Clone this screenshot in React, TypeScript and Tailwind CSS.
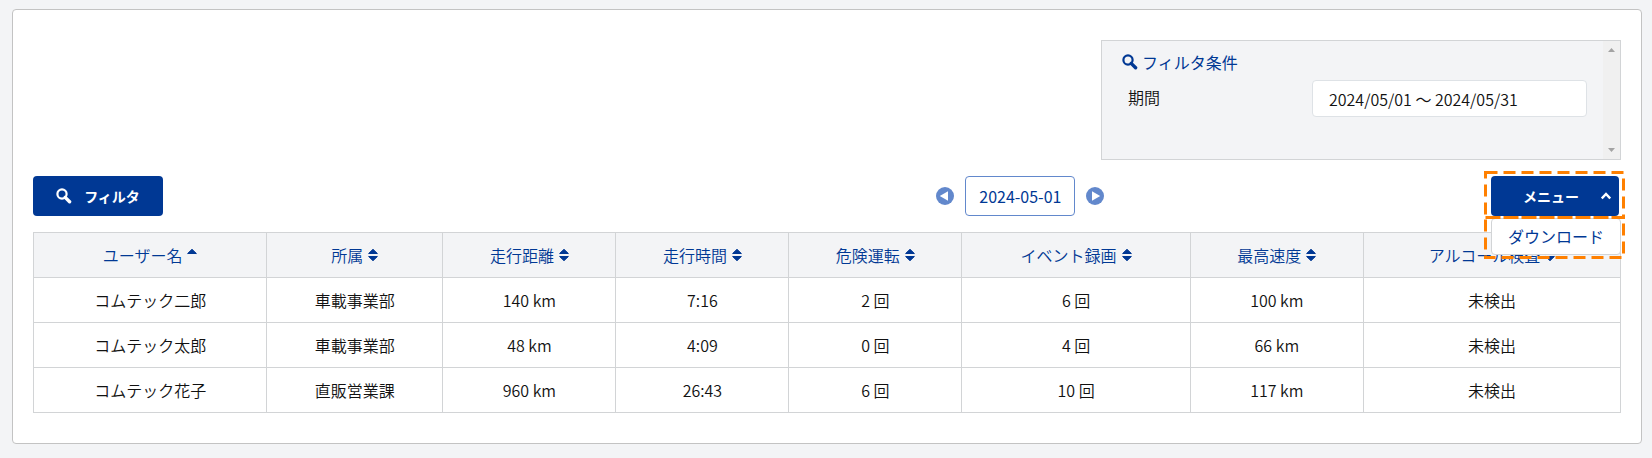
import { useState } from "react";

type SortState = "asc" | "none";

interface Column {
  label: string;
  width: string;
  sort: SortState;
}

const columns: Column[] = [
  { label: "ユーザー名", width: "w-[14.7%]", sort: "asc" },
  { label: "所属", width: "w-[11.1%]", sort: "none" },
  { label: "走行距離", width: "w-[10.9%]", sort: "none" },
  { label: "走行時間", width: "w-[10.9%]", sort: "none" },
  { label: "危険運転", width: "w-[10.9%]", sort: "none" },
  { label: "イベント録画", width: "w-[14.4%]", sort: "none" },
  { label: "最高速度", width: "w-[10.9%]", sort: "none" },
  { label: "アルコール検査", width: "w-[16.2%]", sort: "none" },
];

const rows = [
  ["コムテック二郎", "車載事業部", "140 km", "7:16", "2 回", "6 回", "100 km", "未検出"],
  ["コムテック太郎", "車載事業部", "48 km", "4:09", "0 回", "4 回", "66 km", "未検出"],
  ["コムテック花子", "直販営業課", "960 km", "26:43", "6 回", "10 回", "117 km", "未検出"],
];

function SearchIcon() {
  return (
    <svg viewBox="0 0 16 16" className="size-4 shrink-0" aria-hidden="true">
      <circle cx="6" cy="6" r="4.6" fill="none" stroke="currentColor" strokeWidth="2.2" />
      <path d="M9.2 9.4 L13.6 13.8" stroke="currentColor" strokeWidth="3.4" strokeLinecap="round" />
    </svg>
  );
}

function SortIcon({ state }: { state: SortState }) {
  return (
    <svg
      viewBox="0 0 10 14"
      className="h-[14px] w-[10px] shrink-0"
      fill="currentColor"
      stroke="currentColor"
      strokeWidth="1"
      strokeLinejoin="round"
      aria-hidden="true"
    >
      <path d="M5 1.3 L9.4 5.5 H0.6 Z" />
      {state === "none" && <path d="M5 12.7 L9.4 8.5 H0.6 Z" />}
    </svg>
  );
}

function DayButton({ label, d }: { label: string; d: string }) {
  return (
    <button type="button" aria-label={label} className="size-[18px]">
      <svg viewBox="0 0 18 18" className="size-full" aria-hidden="true">
        <circle cx="9" cy="9" r="9" fill="#6288cc" />
        <path d={d} fill="#fff" />
      </svg>
    </button>
  );
}

function FilterConditions() {
  return (
    <section className="ml-auto flex h-[120px] w-full max-w-[520px] border border-[#d2d4d6] bg-[#f3f4f6]">
      <div className="min-w-0 flex-1 pt-[9px] pr-4 pl-5">
        <h2 className="flex items-center gap-1 leading-6 text-[#003894]">
          <SearchIcon />
          フィルタ条件
        </h2>
        <div className="mt-1.5 flex items-start justify-between gap-4 pl-1.5">
          <label htmlFor="period" className="leading-[34px] font-[350]">
            期間
          </label>
          <input
            id="period"
            readOnly
            defaultValue="2024/05/01 〜 2024/05/31"
            className="h-[37px] w-[275px] rounded border border-[#dee2e6] bg-white px-4 font-[350]"
          />
        </div>
      </div>
      <div className="flex w-[17px] flex-col items-center justify-between bg-[#f0f0f0] py-[7px] text-[#a3a3a3]">
        <svg viewBox="0 0 7 4" className="h-1 w-[7px]" aria-hidden="true">
          <path d="M0 4 L3.5 0 L7 4 Z" fill="currentColor" />
        </svg>
        <svg viewBox="0 0 7 4" className="h-1 w-[7px]" aria-hidden="true">
          <path d="M0 0 L3.5 4 L7 0 Z" fill="currentColor" />
        </svg>
      </div>
    </section>
  );
}

function ActionMenu() {
  const [open, setOpen] = useState(true);

  return (
    <div className="relative mr-0.5">
      <button
        type="button"
        aria-expanded={open}
        onClick={() => setOpen((previous) => !previous)}
        className="flex h-10 w-32 items-center justify-between rounded bg-[#003894] pr-2 pl-8 text-sm font-bold text-white"
      >
        メニュー
        <svg viewBox="0 0 10 8" className="h-2 w-2.5" aria-hidden="true">
          <path d="M0.8 6.5 L5 2 L9.2 6.5" fill="none" stroke="currentColor" strokeWidth="2.4" />
        </svg>
      </button>
      {open && (
        <div className="absolute top-full left-0 z-10 mt-0.5 w-[130px] rounded border border-[#d2d4d6] bg-white">
          <a href="#download" className="block text-center leading-[35px] text-[#003894]">
            ダウンロード
          </a>
        </div>
      )}
      <svg
        viewBox="0 0 141 88"
        className="pointer-events-none absolute -top-[5px] -left-[7px] z-20 h-[88px] w-[141px] max-w-none"
        fill="none"
        stroke="#ff8000"
        strokeWidth="3"
        strokeDasharray="12 6"
        aria-hidden="true"
      >
        <rect x="1.5" y="1.5" width="138" height="45" />
        <rect x="1.5" y="46.5" width="138" height="40" />
      </svg>
    </div>
  );
}

export default function App() {
  return (
    <main className="min-h-screen bg-[#f3f4f6] pt-[9px] pr-[10px] pb-[14px] pl-3 font-['Noto_Sans_CJK_JP',sans-serif] text-base text-[#111]">
      <div className="rounded border border-[#c3c3c3] bg-white px-5 pt-[30px] pb-[30px]">
        <FilterConditions />

        <div className="mt-4 flex items-center">
          <button
            type="button"
            className="flex h-10 w-[130px] items-center justify-center gap-3 rounded bg-[#003894] text-sm font-bold text-white"
          >
            <SearchIcon />
            フィルタ
          </button>
          <div className="flex-2" />
          <div className="flex items-center gap-[11px]">
            <DayButton label="前日" d="M3.8 9 L12 4.2 V13.8 Z" />
            <button
              type="button"
              className="h-10 w-[110px] rounded border border-[#6288cc] text-[#003894]"
            >
              2024-05-01
            </button>
            <DayButton label="翌日" d="M14.2 9 L6 4.2 V13.8 Z" />
          </div>
          <div className="flex-1" />
          <ActionMenu />
        </div>

        <table className="mt-4 w-full table-fixed border-collapse text-center">
          <thead>
            <tr className="h-[45px] bg-[#f3f4f6] text-[#003894]">
              {columns.map((column) => (
                <th
                  key={column.label}
                  aria-sort={column.sort === "asc" ? "ascending" : "none"}
                  className={`${column.width} border border-[#d2d4d6] pb-0.5 font-[350]`}
                >
                  <button type="button" className="inline-flex items-center gap-[5px] align-middle">
                    {column.label}
                    <SortIcon state={column.sort} />
                  </button>
                </th>
              ))}
            </tr>
          </thead>
          <tbody>
            {rows.map((row) => (
              <tr key={row[0]} className="h-[45px]">
                {row.map((cell, index) => (
                  <td key={index} className="border border-[#d2d4d6] font-[350]">
                    {cell}
                  </td>
                ))}
              </tr>
            ))}
          </tbody>
        </table>
      </div>
    </main>
  );
}
